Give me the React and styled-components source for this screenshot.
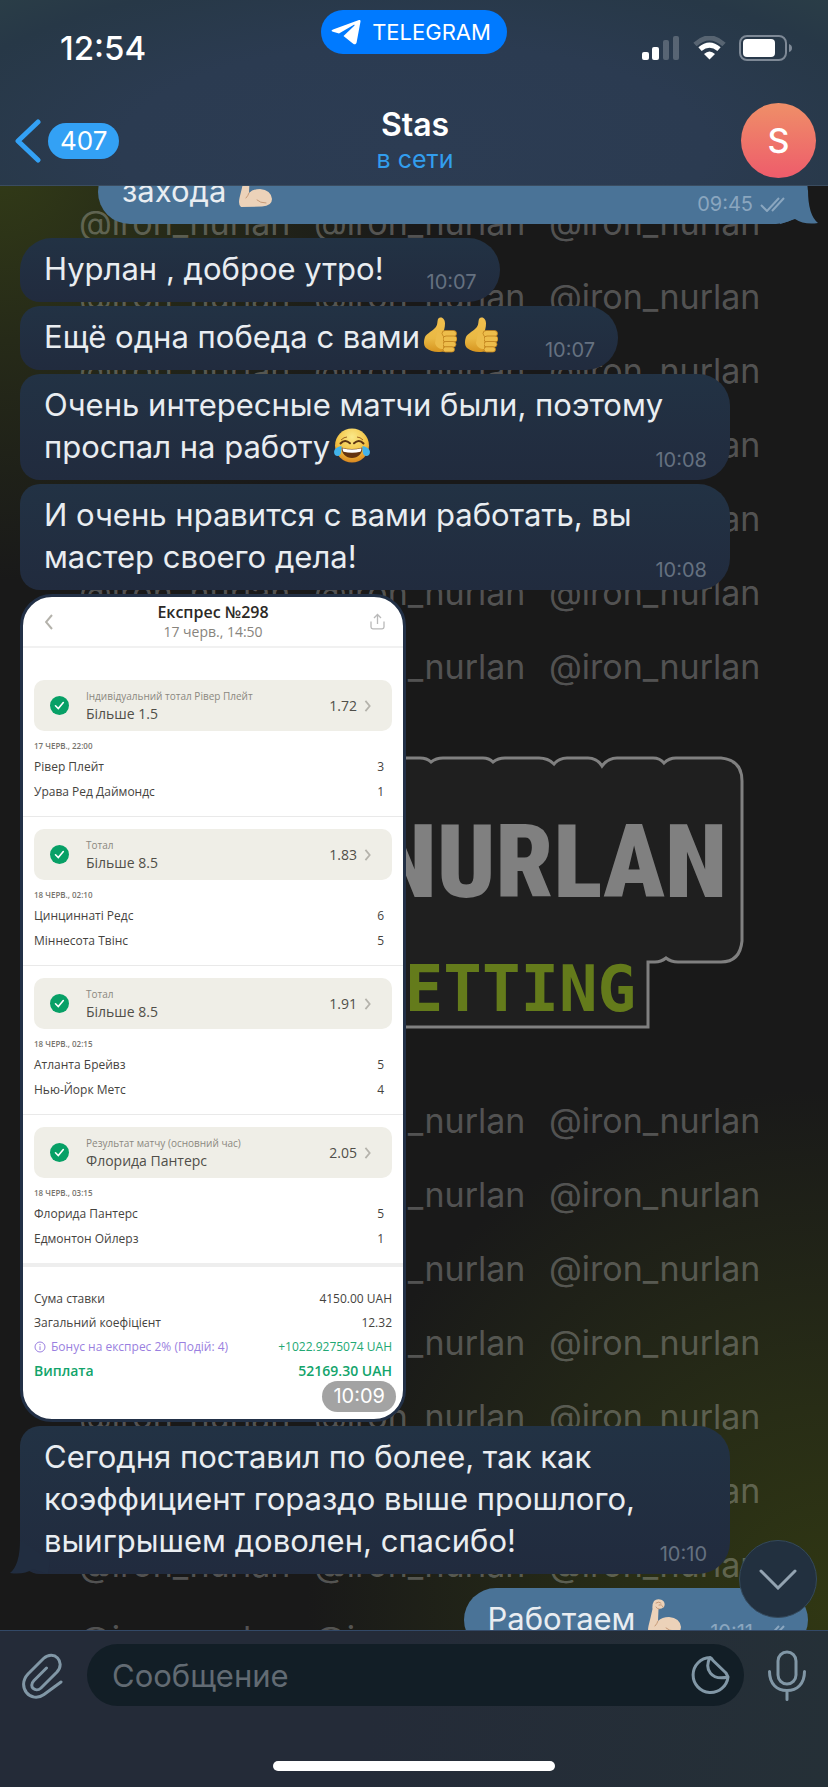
import React from 'react';
import styled, { createGlobalStyle } from 'styled-components';

const GlobalStyle = createGlobalStyle`
  * {
    box-sizing: border-box;
  }

  body {
    margin: 0;
    background: #191919;
    font-family: Inter, 'Liberation Sans', sans-serif;
  }

  button {
    padding: 0;
    border: 0;
    background: none;
    color: inherit;
    font: inherit;
    cursor: pointer;
  }

  svg {
    display: block;
    flex: none;
  }
`;

const Phone = styled.div`
  position: relative;
  display: flex;
  flex-direction: column;
  min-height: 100vh;
  overflow: hidden;
  color: #e9edf1;
  background:
    radial-gradient(circle at 0% 9%, #323b17 0, #262a18 180px, rgba(25, 25, 25, 0) 420px),
    radial-gradient(circle at 100% 90%, #303713 0, #282d16 200px, rgba(25, 25, 25, 0) 520px),
    #191919;
`;

/* ---------- Header ---------- */

const TopBar = styled.header`
  position: relative;
  z-index: 2;
  border-bottom: 1px solid #3a4c60;
  background: radial-gradient(ellipse at 50% 80%, #2c3c53 0, #2b3b51 50%, #273847 85%, #2a3d47 100%);
`;

const StatusBar = styled.div`
  display: grid;
  grid-template-columns: 1fr auto 1fr;
  align-items: center;
  height: 96px;
  padding: 0 36px 0 60px;
`;

const Clock = styled.time`
  color: #fff;
  font-size: 33px;
  font-weight: 500;
`;

const AppPill = styled.div`
  display: flex;
  align-items: center;
  align-self: start;
  gap: 11px;
  height: 44px;
  margin: 10px 0 0 -24px;
  padding: 0 16px 0 10px;
  border-radius: 22px;
  background: #007aff;
  color: #fff;
  font-size: 22px;
`;

const StatusIcons = styled.div`
  display: flex;
  justify-content: flex-end;
  align-items: center;
  gap: 13px;
`;

const NavBar = styled.div`
  display: grid;
  grid-template-columns: 1fr auto 1fr;
  align-items: center;
  height: 89px;
  padding: 0 12px 0 14px;
`;

const BackButton = styled.button`
  display: flex;
  align-items: center;
  justify-self: start;
  gap: 6px;
`;

const Unread = styled.span`
  padding: 0 12px;
  border-radius: 18px;
  background: #33a1f5;
  color: #fff;
  font-size: 26px;
  line-height: 36px;
`;

const Contact = styled.div`
  text-align: center;
`;

const ContactName = styled.h1`
  margin: 0;
  color: #fff;
  font-size: 32px;
  font-weight: 600;
  line-height: 36px;
`;

const ContactStatus = styled.p`
  margin: 0;
  color: #329eee;
  font-size: 25px;
  line-height: 32px;
`;

const Avatar = styled.button`
  justify-self: end;
  width: 75px;
  height: 75px;
  border-radius: 50%;
  background: linear-gradient(#ef8f68, #ee5c6b);
  color: #fff;
  font-size: 34px;
  font-weight: 500;
`;

/* ---------- Wallpaper ---------- */

const Wallpaper = styled.div`
  position: absolute;
  inset: 26px 0 0;
  padding-left: 79px;
  color: rgba(255, 255, 255, 0.26);
  font-size: 34px;
  line-height: 74px;
  white-space: nowrap;
`;

const HandleRow = styled.div`
  display: grid;
  grid-template-columns: repeat(3, 235px);
  height: 74px;
`;

const LogoArea = styled.div`
  height: 380px;
`;

/* ---------- Messages ---------- */

const Chat = styled.main`
  position: relative;
  flex: 1;
  display: flex;
  flex-direction: column;
  gap: 4px;
  margin: -26px 0 -22px;
  padding: 0 20px;
`;

const Group = styled.section`
  display: flex;
  flex-direction: column;
  gap: 4px;
  margin: 10px 0;
`;

const inFill = 'linear-gradient(#223244, #212b3e)';
const outFill = '#4a7397';

const Bubble = styled.article`
  position: relative;
  display: flex;
  align-items: flex-end;
  align-self: ${({ $out }) => ($out ? 'flex-end' : 'flex-start')};
  gap: ${({ $out }) => ($out ? 24 : 43)}px;
  width: ${({ $wide }) => ($wide ? '710px' : 'auto')};
  max-width: 100%;
  padding: 10px 23px 12px 24px;
  border-radius: ${({ $out, $first }) =>
    $out ? '32px' : $first ? '32px 32px 32px 20px' : '20px 32px 32px 20px'};
  background: ${({ $out }) => ($out ? outFill : inFill)};
`;

const MessageText = styled.p`
  flex: 1;
  min-width: 0;
  margin: 0;
  font-size: 31px;
  line-height: 42px;
  white-space: nowrap;

  svg {
    display: inline-block;
    margin: 0 4px;
    vertical-align: -5px;
  }
`;

const Meta = styled.span`
  display: flex;
  align-items: center;
  gap: 7px;
  height: 24px;
  margin-bottom: -4px;
  color: ${({ $out }) => ($out ? '#8aa6bf' : '#657180')};
  font-size: 20px;
  line-height: 24px;
`;

const Tail = styled.svg`
  position: absolute;
  bottom: 0;
  ${({ $out }) => ($out ? 'right: -10px;' : 'left: -10px; transform: scaleX(-1);')}
`;

/* ---------- Bet slip ---------- */

const Slip = styled.article`
  position: relative;
  align-self: flex-start;
  width: 386px;
  padding-bottom: 36px;
  border: 3px solid #223046;
  border-radius: 32px;
  background: #fff;
  color: #45433e;
  font-family: 'Open Sans', 'Noto Sans', sans-serif;
  font-size: 13px;
`;

const SlipHeader = styled.header`
  display: grid;
  grid-template-columns: 24px 1fr 24px;
  place-items: center;
  height: 51px;
  padding: 0 14px;
  border-bottom: 2px solid #f1f1f1;
  text-align: center;
`;

const SlipTitle = styled.h2`
  margin: 0;
  color: #2b2926;
  font-size: 16px;
  font-weight: 600;
  line-height: 20px;
`;

const SlipDate = styled.p`
  margin: 0;
  color: #87847d;
  font-size: 14px;
  line-height: 20px;
`;

const BetList = styled.div`
  padding-top: 20px;
`;

const Bet = styled.section`
  padding: 12px 11px;
  border-bottom: 1px solid #e9e9e9;

  &:last-child {
    border-bottom: 4px solid #eee;
  }
`;

const Pick = styled.button`
  display: flex;
  align-items: center;
  width: 100%;
  height: 51px;
  padding: 0 20px 0 16px;
  border-radius: 10px;
  background: #efeee7;
  color: #504e49;
  text-align: left;
`;

const PickText = styled.span`
  flex: 1;
  margin-left: 17px;
`;

const PickMarket = styled.span`
  display: block;
  color: #8b8880;
  font-size: 10px;
  line-height: 16px;
`;

const PickName = styled.span`
  display: block;
  font-size: 14px;
  line-height: 20px;
`;

const Odds = styled.span`
  margin-right: 7px;
  font-size: 14px;
`;

const Kickoff = styled.time`
  display: block;
  padding-top: 6px;
  color: #77746d;
  font-size: 8px;
  font-weight: 600;
  line-height: 17px;
`;

const Line = styled.div`
  display: flex;
  justify-content: space-between;
  padding-right: ${({ $inset }) => ($inset ? 8 : 0)}px;
  color: ${({ $color }) => $color || 'inherit'};
  font-size: ${({ $strong }) => ($strong ? 14 : 12)}px;
  font-weight: ${({ $strong }) => ($strong ? 600 : 400)};
  line-height: ${({ $inset }) => ($inset ? 25 : 24)}px;
`;

const Totals = styled.section`
  padding: 20px 11px 0;
`;

const BonusLabel = styled.span`
  display: flex;
  align-items: center;
  gap: 5px;
  color: #9a7fe0;
`;

const SlipTime = styled.time`
  position: absolute;
  right: 7px;
  bottom: 7px;
  padding: 0 11px;
  border-radius: 16px;
  background: #a3a3a3;
  color: #fff;
  font-family: Inter, sans-serif;
  font-size: 20px;
  line-height: 31px;
`;

/* ---------- Composer ---------- */

const ScrollDown = styled.button`
  position: absolute;
  right: 11px;
  bottom: 34px;
  display: grid;
  place-items: center;
  width: 78px;
  height: 78px;
  border: 1px solid #34495c;
  border-radius: 50%;
  background: #22303f;
`;

const BottomBar = styled.footer`
  position: relative;
  z-index: 2;
  display: flex;
  flex-direction: column;
  align-items: center;
  height: 157px;
  padding: 13px 0 16px;
  border-top: 1px solid #334967;
  background: linear-gradient(100deg, #242b38 45%, #253037 100%);
`;

const Composer = styled.form`
  display: flex;
  align-items: center;
  gap: 24px;
  width: 100%;
  padding: 0 22px;
`;

const Field = styled.label`
  flex: 1;
  display: flex;
  align-items: center;
  height: 62px;
  padding: 0 14px 0 25px;
  border-radius: 31px;
  background: #121e26;
`;

const MessageInput = styled.input`
  flex: 1;
  min-width: 0;
  padding: 0;
  border: 0;
  outline: 0;
  background: none;
  color: #e9edf1;
  font: inherit;
  font-size: 31px;

  &::placeholder {
    color: #626b73;
    opacity: 1;
  }
`;

const HomeIndicator = styled.div`
  width: 34%;
  height: 10px;
  margin-top: auto;
  border-radius: 5px;
  background: #fff;
`;

/* ---------- Icons ---------- */

const PlaneIcon = () => (
  <svg width="30" height="26" viewBox="0 0 30 26" fill="#fff" aria-hidden="true">
    <path d="M28 1 2 10.500c-2 .9-2 1.700 0 2.300l6 1.600L22.500 6c1-.6 1.500 0 .8.700L12.500 17l9.700 7.800c1.500 1.100 3 .5 3.400-1.300L29.500 2.500C29.700 1.200 29 .6 28 1z" />
  </svg>
);

const SignalIcon = () => (
  <svg width="38" height="24" viewBox="0 0 38 24" fill="#fff" aria-hidden="true">
    <rect x="0" y="16" width="7" height="8" rx="2" />
    <rect x="10" y="11" width="7" height="13" rx="2" />
    <rect x="21" y="4" width="6" height="20" rx="2" opacity=".22" />
    <rect x="31" y="0" width="6" height="24" rx="2" opacity=".22" />
  </svg>
);

const WifiIcon = () => (
  <svg width="33" height="24" viewBox="0 0 33 24" fill="none" aria-hidden="true">
    <path d="M2 8.500Q16.500 -4.500 31 8.500" stroke="#fff" strokeOpacity=".22" strokeWidth="5" />
    <path d="M7 13.200Q16.500 5 26 13.200" stroke="#fff" strokeWidth="5" />
    <path d="M11 18Q16.500 13 22 18L16.500 23.500Z" fill="#fff" />
  </svg>
);

const BatteryIcon = () => (
  <svg width="53" height="26" viewBox="0 0 53 26" aria-hidden="true">
    <rect x="1" y="1" width="46" height="24" rx="7" fill="none" stroke="#7e8996" strokeWidth="2" />
    <rect x="4" y="4" width="32" height="18" rx="4" fill="#fff" />
    <path d="M50 9v8q3-1 3-4t-3-4z" fill="#7e8996" />
  </svg>
);

const BackIcon = () => (
  <svg width="28" height="44" viewBox="0 0 28 44" fill="none" aria-hidden="true">
    <path d="M24 3 4 22l20 19" stroke="#33a1f5" strokeWidth="5" strokeLinecap="round" strokeLinejoin="round" />
  </svg>
);

const Ticks = () => (
  <svg width="25" height="15" viewBox="0 0 25 15" fill="none" stroke="#8aa6bf" strokeWidth="2" aria-hidden="true">
    <path d="m1 8 6 6L19 1M12 14 24 1" />
  </svg>
);

const ThumbEmoji = () => (
  <svg width="33" height="36" viewBox="0 0 33 36" role="img" aria-label="👍">
    <defs>
      <linearGradient id="thumb" x1="0" y1="0" x2="0" y2="1">
        <stop offset="0" stopColor="#f0bf4e" />
        <stop offset=".6" stopColor="#eab944" />
        <stop offset="1" stopColor="#d6941f" />
      </linearGradient>
    </defs>
    <path d="M14 2c3-3.500 7-.5 7 4.500 0 4-1 6-1.200 8L24 16v18l-8 1c-6 .3-10-1-14-4-3-3-2-8-1-11 1-3 6-5 10-9 3-3 2-6 3-9z" fill="url(#thumb)" />
    <g fill="#edbd4b" stroke="#bd7d1a" strokeWidth=".8">
      <rect x="18" y="13.500" width="14.500" height="6.200" rx="3.100" />
      <rect x="19" y="19" width="14" height="6" rx="3" />
      <rect x="19" y="24.500" width="13" height="5.600" rx="2.800" />
      <rect x="19" y="29.800" width="11.500" height="5.200" rx="2.600" />
    </g>
    <path d="M13 15c3 0 5 2 6 5v12c-4 0-7-2-8-6z" fill="#ecbc4a" />
  </svg>
);

const JoyEmoji = () => (
  <svg width="36" height="35" viewBox="0 0 36 35" role="img" aria-label="😂">
    <defs>
      <radialGradient id="joy" cx=".5" cy=".25" r=".75">
        <stop offset="0" stopColor="#fae98a" />
        <stop offset=".6" stopColor="#f3c445" />
        <stop offset="1" stopColor="#d98720" />
      </radialGradient>
    </defs>
    <circle cx="18" cy="17.500" r="17" fill="url(#joy)" />
    <path d="M6.500 15.500q4.500-5 9.500-.2M20 15.300q5-4.800 9.500.2" fill="none" stroke="#5c3413" strokeWidth="2" strokeLinecap="round" />
    <path d="M7 12q3-3 6-3M29 12q-3-3-6-3" fill="none" stroke="#9b6322" strokeWidth="1" />
    <path d="M7.500 19.500q10.500 3 21 0c0 6-4.500 10.500-10.500 10.500S7.500 25.500 7.500 19.500z" fill="#643310" />
    <path d="M8.500 20.300q9.500 2.500 19 0 0 2-1 3.500-8.500 2-17 0-1-1.500-1-3.500z" fill="#fff" />
    <path d="M7.500 18c0 0-6.500 1-7.300 5-.6 3 1 5 3.300 5 4 0 4-5 4-10zM28.500 18c0 0 6.500 1 7.300 5 .6 3-1 5-3.300 5-4 0-4-5-4-10z" fill="#42b3ea" />
  </svg>
);

const ArmEmoji = () => (
  <svg width="34" height="36" viewBox="0 0 34 36" role="img" aria-label="💪🏻">
    <path d="M6 2Q9-1 14 1 18 3 16 8 14 10 10.500 10L10 22Q14 18 21 18q11 1 12 10 0 7-10 7.500L2 36Q-1 34 .5 27 3 17 4.500 10 4 5 6 2z" fill="#ecd2b9" />
    <path d="M8 4q3-2 5 0M11 6q3-1 4 2M11 10q-2 0-3-2M10 22q-1 3-3 5M27 32q-6 0-9-3" fill="none" stroke="#c69a78" strokeWidth="1" strokeLinecap="round" />
  </svg>
);

const CheckBadge = () => (
  <svg width="19" height="19" viewBox="0 0 19 19" fill="none" aria-hidden="true">
    <circle cx="9.500" cy="9.500" r="9.500" fill="#07a066" />
    <path d="m5.500 9.800 2.800 2.800 5-6" stroke="#fff" strokeWidth="1.600" strokeLinecap="round" />
  </svg>
);

const Chevron = ({ left }) => (
  <svg width="8" height={left ? 16 : 12} viewBox="0 0 8 14" fill="none" stroke="#b4b2ab" strokeWidth="2" aria-hidden="true">
    <path d={left ? 'M7 0 1 7l6 7' : 'm1 1 5 6-5 6'} />
  </svg>
);

const ShareIcon = () => (
  <svg width="15" height="17" viewBox="0 0 15 17" fill="none" stroke="#b9b9b9" strokeWidth="1.300" aria-hidden="true">
    <path d="M7.500 11V1.500M4 5l3.500-3.500L11 5M1 8.500V14q0 1.800 1.800 1.800h9.400Q14 15.800 14 14V8.500" />
  </svg>
);

const InfoIcon = () => (
  <svg width="12" height="12" viewBox="0 0 12 12" fill="none" stroke="#9a7fe0" aria-hidden="true">
    <circle cx="6" cy="6" r="5" />
    <path d="M6 5.300V9M6 3v1.200" />
  </svg>
);

const ClipIcon = () => (
  <svg width="41" height="47" viewBox="0 0 41 47" fill="none" stroke="#8197a6" strokeWidth="3" strokeLinecap="round" aria-hidden="true">
    <path d="M24.500 16 12 28.500c-6 6.200 1.500 12.500 7 7.500l16-16c9-10-3-23-13.500-13.500L6 22C-6 35 9 52 22 42.500L39 30" />
  </svg>
);

const StickerIcon = () => (
  <svg width="39" height="38" viewBox="0 0 39 38" fill="none" stroke="#8197a6" strokeWidth="3" strokeLinejoin="round" aria-hidden="true">
    <path d="M19 1.500A17.500 17.500 0 1 0 37 21L35 17 22 4.500Q20.500 2 19 1.500C13 13 20 25 37 21" />
  </svg>
);

const MicIcon = () => (
  <svg width="38" height="51" viewBox="0 0 38 51" fill="none" stroke="#8197a6" strokeWidth="3" strokeLinecap="round" aria-hidden="true">
    <rect x="10" y="2" width="18" height="32" rx="9" />
    <path d="M1.500 21.500C1.500 34 9 40.500 19 40.500s17.500-6.500 17.500-19M19 41v8.500" />
  </svg>
);

const DownIcon = () => (
  <svg width="38" height="21" viewBox="0 0 38 21" fill="none" stroke="#93a3b1" strokeWidth="3" strokeLinecap="round" aria-hidden="true">
    <path d="m2 2 17 17L36 2" />
  </svg>
);

const BubbleTail = ({ out }) => (
  <Tail $out={out} width="40" height="34" viewBox="0 0 40 34" aria-hidden="true">
    <path d="M30 0q0 25 10 33-14 2-23-4L2 34 0 20z" fill={out ? outFill : '#212d40'} />
  </Tail>
);

const WallpaperLogo = () => (
  <svg width="664" height="380" viewBox="79 705 664 380" overflow="visible" aria-hidden="true">
    <path
      d="M107 759H420Q427 759 431 763 436 759 443 759H483Q489 759 493 763 498 759 505 759H539Q548 759 554 765 559 759 567 759H588Q597 759 602 767 608 759 617 759H653Q660 759 664 764 669 759 676 759H721Q742 761 742 782V942Q740 963 721 963H678Q671 963 666 959 661 963 655 963H648V1028H107Z"
      fill="#1f1f1f"
      stroke="#808080"
      strokeWidth="3"
    />
    <text x="727" y="898" textAnchor="end" fill="#808080" fontFamily="'Roboto Condensed', Roboto, sans-serif" fontSize="102" fontWeight="900">
      NURLAN
    </text>
    <text x="636" y="1012" textAnchor="end" fill="#647b1b" fontFamily="'DejaVu Sans Mono', monospace" fontSize="64" fontWeight="700">
      BETTING
    </text>
  </svg>
);

/* ---------- Data ---------- */

const bets = [
  { market: 'Індивідуальний тотал Рівер Плейт', pick: 'Більше 1.5', odds: '1.72', date: '17 ЧЕРВ., 22:00', score: [['Рівер Плейт', 3], ['Урава Ред Даймондс', 1]] },
  { market: 'Тотал', pick: 'Більше 8.5', odds: '1.83', date: '18 ЧЕРВ., 02:10', score: [['Цинциннаті Редс', 6], ['Міннесота Твінс', 5]] },
  { market: 'Тотал', pick: 'Більше 8.5', odds: '1.91', date: '18 ЧЕРВ., 02:15', score: [['Атланта Брейвз', 5], ['Нью-Йорк Метс', 4]] },
  { market: 'Результат матчу (основний час)', pick: 'Флорида Пантерс', odds: '2.05', date: '18 ЧЕРВ., 03:15', score: [['Флорида Пантерс', 5], ['Едмонтон Ойлерз', 1]] },
];

const HandleRows = ({ count }) =>
  Array.from({ length: count }, (_, i) => (
    <HandleRow key={i}>
      <span>@iron_nurlan</span>
      <span>@iron_nurlan</span>
      <span>@iron_nurlan</span>
    </HandleRow>
  ));

const Message = ({ children, time, out, wide, first, tail }) => (
  <Bubble $out={out} $wide={wide} $first={first}>
    {tail && <BubbleTail out={out} />}
    <MessageText>{children}</MessageText>
    <Meta $out={out}>
      <time>{time}</time>
      {out && <Ticks />}
    </Meta>
  </Bubble>
);

const BetSlip = () => (
  <Slip>
    <SlipHeader>
      <button type="button" aria-label="Назад"><Chevron left /></button>
      <div>
        <SlipTitle>Експрес №298</SlipTitle>
        <SlipDate>17 черв., 14:50</SlipDate>
      </div>
      <button type="button" aria-label="Поділитися"><ShareIcon /></button>
    </SlipHeader>
    <BetList>
      {bets.map((bet) => (
        <Bet key={bet.date}>
          <Pick type="button">
            <CheckBadge />
            <PickText>
              <PickMarket>{bet.market}</PickMarket>
              <PickName>{bet.pick}</PickName>
            </PickText>
            <Odds>{bet.odds}</Odds>
            <Chevron />
          </Pick>
          <Kickoff>{bet.date}</Kickoff>
          {bet.score.map(([team, goals]) => (
            <Line key={team} $inset>
              <span>{team}</span>
              <span>{goals}</span>
            </Line>
          ))}
        </Bet>
      ))}
    </BetList>
    <Totals>
      <Line><span>Сума ставки</span><span>4150.00 UAH</span></Line>
      <Line><span>Загальний коефіцієнт</span><span>12.32</span></Line>
      <Line $color="#22a873">
        <BonusLabel><InfoIcon />Бонус на експрес 2% (Подій: 4)</BonusLabel>
        <span>+1022.9275074 UAH</span>
      </Line>
      <Line $color="#12a46b" $strong><span>Виплата</span><span>52169.30 UAH</span></Line>
    </Totals>
    <SlipTime>10:09</SlipTime>
  </Slip>
);

export default function App() {
  return (
    <Phone>
      <GlobalStyle />
      <TopBar>
        <StatusBar>
          <Clock>12:54</Clock>
          <AppPill><PlaneIcon />TELEGRAM</AppPill>
          <StatusIcons><SignalIcon /><WifiIcon /><BatteryIcon /></StatusIcons>
        </StatusBar>
        <NavBar>
          <BackButton type="button"><BackIcon /><Unread>407</Unread></BackButton>
          <Contact>
            <ContactName>Stas</ContactName>
            <ContactStatus>в сети</ContactStatus>
          </Contact>
          <Avatar type="button">S</Avatar>
        </NavBar>
      </TopBar>

      <Chat>
        <Wallpaper aria-hidden="true">
          <HandleRows count={7} />
          <LogoArea><WallpaperLogo /></LogoArea>
          <HandleRows count={8} />
        </Wallpaper>

        <Message time="09:45" out wide tail>захода <ArmEmoji /></Message>
        <Group>
          <Message time="10:07" first>Нурлан , доброе утро!</Message>
          <Message time="10:07">Ещё одна победа с вами<ThumbEmoji /><ThumbEmoji /></Message>
          <Message time="10:08" wide>
            Очень интересные матчи были, поэтому<br />проспал на работу<JoyEmoji />
          </Message>
          <Message time="10:08" wide>
            И очень нравится с вами работать, вы<br />мастер своего дела!
          </Message>
          <BetSlip />
          <Message time="10:10" wide tail>
            Сегодня поставил по более, так как<br />коэффициент гораздо выше прошлого,<br />выигрышем доволен, спасибо!
          </Message>
        </Group>
        <Message time="10:11" out>Работаем <ArmEmoji /></Message>
        <ScrollDown type="button" aria-label="Вниз"><DownIcon /></ScrollDown>
      </Chat>

      <BottomBar>
        <Composer>
          <button type="button" aria-label="Прикрепить"><ClipIcon /></button>
          <Field>
            <MessageInput type="text" placeholder="Сообщение" aria-label="Сообщение" />
            <button type="button" aria-label="Стикеры"><StickerIcon /></button>
          </Field>
          <button type="button" aria-label="Голосовое сообщение"><MicIcon /></button>
        </Composer>
        <HomeIndicator />
      </BottomBar>
    </Phone>
  );
}
